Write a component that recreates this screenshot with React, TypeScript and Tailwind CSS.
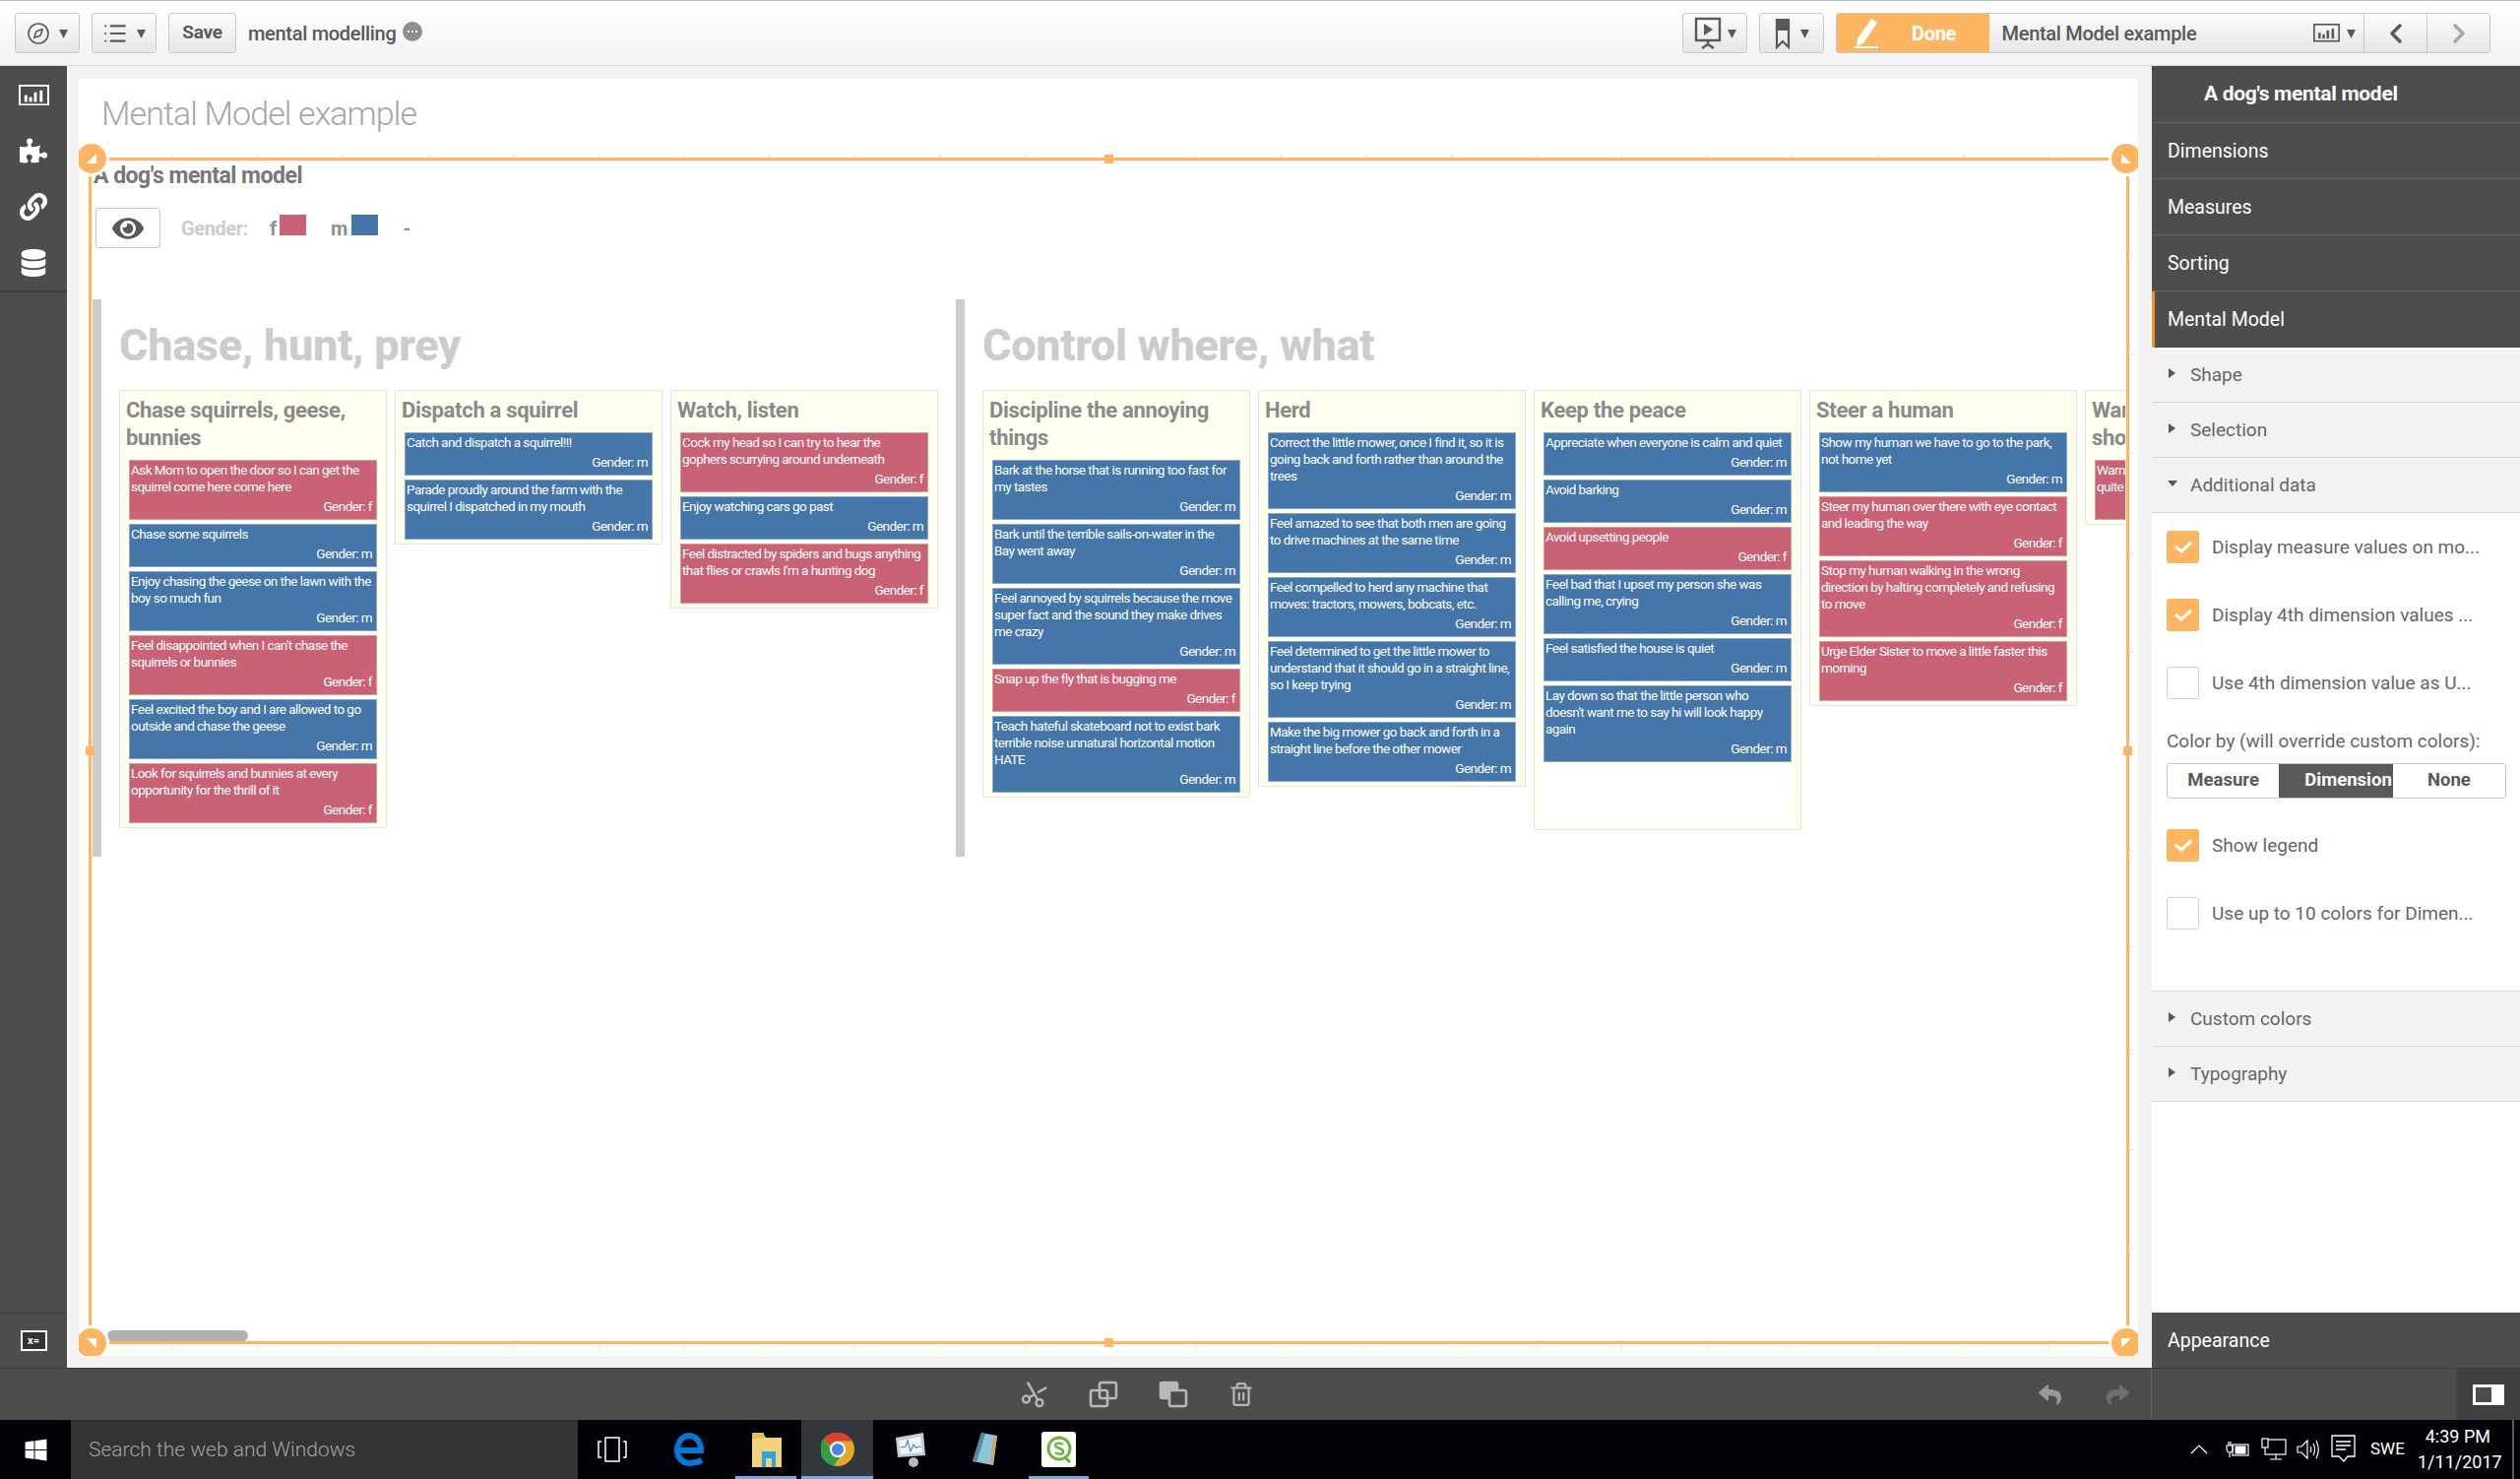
import { Compass, List, ChevronLeft, ChevronRight, Scissors, Trash2 } from "lucide-react";
import { FaDatabase, FaEye, FaLink, FaPuzzlePiece, FaReply, FaShare, FaWindows } from "react-icons/fa";

type Card = { text: string; g: "f" | "m" };
type Col = { title: string; cards: Card[]; filler?: boolean };

const group1: Col[] = [
  {
    title: "Chase squirrels, geese,\nbunnies",
    cards: [
      { text: "Ask Mom to open the door so I can get the\nsquirrel come here come here", g: "f" },
      { text: "Chase some squirrels", g: "m" },
      { text: "Enjoy chasing the geese on the lawn with the\nboy so much fun", g: "m" },
      { text: "Feel disappointed when I can't chase the\nsquirrels or bunnies", g: "f" },
      { text: "Feel excited the boy and I are allowed to go\noutside and chase the geese", g: "m" },
      { text: "Look for squirrels and bunnies at every\nopportunity for the thrill of it", g: "f" },
    ],
  },
  {
    title: "Dispatch a squirrel",
    cards: [
      { text: "Catch and dispatch a squirrel!!!", g: "m" },
      { text: "Parade proudly around the farm with the\nsquirrel I dispatched in my mouth", g: "m" },
    ],
  },
  {
    title: "Watch, listen",
    cards: [
      { text: "Cock my head so I can try to hear the\ngophers scurrying around underneath", g: "f" },
      { text: "Enjoy watching cars go past", g: "m" },
      { text: "Feel distracted by spiders and bugs anything\nthat flies or crawls I'm a hunting dog", g: "f" },
    ],
  },
];

const group2: Col[] = [
  {
    title: "Discipline the annoying\nthings",
    cards: [
      { text: "Bark at the horse that is running too fast for\nmy tastes", g: "m" },
      { text: "Bark until the terrible sails-on-water in the\nBay went away", g: "m" },
      { text: "Feel annoyed by squirrels because the move\nsuper fact and the sound they make drives\nme crazy", g: "m" },
      { text: "Snap up the fly that is bugging me", g: "f" },
      { text: "Teach hateful skateboard not to exist bark\nterrible noise unnatural horizontal motion\nHATE", g: "m" },
    ],
  },
  {
    title: "Herd",
    cards: [
      { text: "Correct the little mower, once I find it, so it is\ngoing back and forth rather than around the\ntrees", g: "m" },
      { text: "Feel amazed to see that both men are going\nto drive machines at the same time", g: "m" },
      { text: "Feel compelled to herd any machine that\nmoves: tractors, mowers, bobcats, etc.", g: "m" },
      { text: "Feel determined to get the little mower to\nunderstand that it should go in a straight line,\nso I keep trying", g: "m" },
      { text: "Make the big mower go back and forth in a\nstraight line before the other mower", g: "m" },
    ],
  },
  {
    title: "Keep the peace",
    filler: true,
    cards: [
      { text: "Appreciate when everyone is calm and quiet", g: "m" },
      { text: "Avoid barking", g: "m" },
      { text: "Avoid upsetting people", g: "f" },
      { text: "Feel bad that I upset my person she was\ncalling me, crying", g: "m" },
      { text: "Feel satisfied the house is quiet", g: "m" },
      { text: "Lay down so that the little person who\ndoesn't want me to say hi will look happy\nagain", g: "m" },
    ],
  },
  {
    title: "Steer a human",
    cards: [
      { text: "Show my human we have to go to the park,\nnot home yet", g: "m" },
      { text: "Steer my human over there with eye contact\nand leading the way", g: "f" },
      { text: "Stop my human walking in the wrong\ndirection by halting completely and refusing\nto move", g: "f" },
      { text: "Urge Elder Sister to move a little faster this\nmorning", g: "f" },
    ],
  },
  {
    title: "Warn people about\nshortcuts",
    cards: [{ text: "Warn my human when things are\nquite wrong", g: "f" }],
  },
];

function Caret({ className = "" }: { className?: string }) {
  return (
    <svg width="9" height="10" viewBox="0 0 9 10" className={className}>
      <polygon points="0,1 9,1 4.5,10" fill="currentColor" />
    </svg>
  );
}

function ChartGlyph({ size = 32, color = "#fff" }: { size?: number; color?: string }) {
  return (
    <svg width={size} height={(size * 22) / 32} viewBox="0 0 32 22">
      <rect x="1" y="1" width="30" height="20" fill="none" stroke={color} strokeWidth="2" />
      <rect x="6" y="11" width="3" height="7" fill={color} />
      <rect x="11" y="13" width="3" height="5" fill={color} />
      <rect x="16" y="8" width="3" height="10" fill={color} />
      <rect x="22" y="6" width="3" height="12" fill={color} />
    </svg>
  );
}

function ToolBtn({ children, className = "" }: { children: React.ReactNode; className?: string }) {
  return (
    <div className={`h-[41px] flex items-center justify-center border border-[#c8c8c8] rounded-[3px] bg-gradient-to-b from-[#fcfcfc] to-[#e6e6e6] text-[#595959] ${className}`}>
      {children}
    </div>
  );
}

function TopBar() {
  return (
    <div className="h-[67px] shrink-0 flex items-center pl-[15px] pr-[30px] border-t border-t-[#bdbdbd] border-b border-b-[#dcdcdc] bg-gradient-to-b from-white to-[#f2f2f2]">
      <ToolBtn className="w-[66px] gap-[9px]">
        <Compass size={24} strokeWidth={1.6} />
        <Caret />
      </ToolBtn>
      <ToolBtn className="w-[66px] gap-[9px] ml-[12px]">
        <List size={26} strokeWidth={2} />
        <Caret />
      </ToolBtn>
      <ToolBtn className="w-[69px] ml-[12px] text-[19px] font-bold tracking-[-0.3px]">Save</ToolBtn>
      <div className="ml-[12px] text-[20px] font-medium tracking-[-0.3px] text-[#595959]">mental modelling</div>
      <div className="ml-[6px] -mt-[3px] w-[20px] h-[20px] rounded-full bg-[#8f8f8f] flex items-center justify-center gap-[2px]">
        <span className="w-[2px] h-[2px] bg-white" />
        <span className="w-[2px] h-[2px] bg-white" />
        <span className="w-[2px] h-[2px] bg-white" />
      </div>

      <div className="ml-auto flex items-center">
        <ToolBtn className="w-[66px] gap-[6px]">
          <svg width="28" height="34" viewBox="0 0 28 34" fill="none" stroke="#595959" strokeWidth="2.4">
            <rect x="2" y="2" width="24" height="22" />
            <polygon points="10,7 19,13 10,19" fill="#595959" stroke="none" />
            <path d="M14 24v5M8 32l6-4 6 4" />
          </svg>
          <Caret />
        </ToolBtn>
        <ToolBtn className="w-[66px] gap-[10px] ml-[12px]">
          <svg width="16" height="32" viewBox="0 0 16 32" fill="none" stroke="#595959" strokeWidth="2.2">
            <path d="M2 4a2 2 0 0 1 2-2h8a2 2 0 0 1 2 2v26l-6-6-6 6z" />
            <path d="M2 2h12v10H2z" fill="#595959" />
          </svg>
          <Caret />
        </ToolBtn>
        <div className="ml-[12px] h-[41px] w-[665px] flex border border-[#c8c8c8] rounded-[3px] overflow-hidden">
          <div className="w-[155px] bg-[#fcb662] text-white flex items-center pl-[17px]">
            <svg width="26" height="32" viewBox="0 0 26 32" fill="#fff">
              <path d="M18 1l6 4-14 21-7 3 1-8z" />
              <rect x="1" y="29" width="24" height="2" />
            </svg>
            <span className="ml-[33px] text-[20px] font-bold tracking-[-0.3px]">Done</span>
          </div>
          <div className="w-[382px] bg-gradient-to-b from-[#fcfcfc] to-[#e6e6e6] flex items-center pl-[13px] text-[20px] font-medium tracking-[-0.3px] text-[#595959]">
            Mental Model example
            <span className="ml-auto flex items-center gap-[7px] pr-[8px]">
              <ChartGlyph size={27} color="#595959" />
              <Caret />
            </span>
          </div>
          <div className="w-[64px] border-l border-[#c8c8c8] bg-gradient-to-b from-[#fcfcfc] to-[#e6e6e6] flex items-center justify-center text-[#595959]">
            <ChevronLeft size={32} strokeWidth={2.6} />
          </div>
          <div className="w-[64px] border-l border-[#c8c8c8] bg-gradient-to-b from-[#fcfcfc] to-[#e6e6e6] flex items-center justify-center text-[#a6a6a6]">
            <ChevronRight size={32} strokeWidth={2.6} />
          </div>
        </div>
      </div>
    </div>
  );
}

function LeftBar() {
  return (
    <div className="w-[68px] shrink-0 bg-[#4d4d4d] flex flex-col items-center text-white">
      <div className="h-[230px] w-full border-b-2 border-[#3d3d3d] flex flex-col items-center pt-[19px]">
        <ChartGlyph size={31} />
        <FaPuzzlePiece size={28} className="mt-[32px]" />
        <FaLink size={28} className="mt-[29px]" />
        <FaDatabase size={28} className="mt-[29px]" />
      </div>
      <div className="mt-auto h-[56px] w-full border-t border-[#3d3d3d] flex items-center justify-center">
        <div className="w-[27px] h-[21px] bg-white flex items-center justify-center">
          <div className="w-[23px] h-[17px] bg-[#333] text-white text-[11px] leading-[17px] font-bold text-center">x=</div>
        </div>
      </div>
    </div>
  );
}

function KanbanCard({ card }: { card: Card }) {
  const bg = card.g === "f" ? "bg-[#c96274] border-[#dc9aa5]" : "bg-[#4476aa] border-[#86a8cb]";
  return (
    <div className={`${bg} border text-white text-[13.5px] leading-[17px] tracking-[-0.55px] pl-[1px] pr-[4px] pt-[1px] pb-[4px]`}>
      <div className="whitespace-pre">{card.text}</div>
      <div className="mt-[3px] text-right">Gender: {card.g}</div>
    </div>
  );
}

function Column({ col }: { col: Col }) {
  return (
    <div className={`w-[272px] shrink-0 bg-[#fffff0] border border-[#e4e4de] pb-[4px] flex flex-col self-start ${col.filler ? "h-[447px]" : ""}`}>
      <div className="px-[6px] pt-[6px] pb-[8px] text-[22px] leading-[28px] font-bold tracking-[-0.3px] text-[#8a8a8a] whitespace-pre">{col.title}</div>
      <div className="mx-[9px] flex flex-col gap-[4px] flex-1">
        {col.cards.map((c) => (
          <KanbanCard key={c.text} card={c} />
        ))}
        {col.filler && <div className="flex-1 bg-white" />}
      </div>
    </div>
  );
}

function Group({ title, cols, className }: { title: string; cols: Col[]; className: string }) {
  return (
    <div className={`h-[566px] shrink-0 border-l-[9px] border-[#cccccc] pl-[18px] ${className}`}>
      <div className="h-[92px] pt-[2px] flex items-center text-[45px] font-extrabold tracking-[-0.3px] text-[#cccccc] whitespace-nowrap">{title}</div>
      <div className="flex gap-[8px]">
        {cols.map((c) => (
          <Column key={c.title} col={c} />
        ))}
      </div>
    </div>
  );
}

function Handle({ className, points }: { className: string; points: string }) {
  return (
    <div className={`absolute w-[36px] h-[36px] rounded-full bg-[#fcb662] border-[3px] border-white flex items-center justify-center ${className}`}>
      <svg width="12" height="12" viewBox="0 0 12 12">
        <polygon points={points} fill="#fff" />
      </svg>
    </div>
  );
}

function SelectionFrame() {
  const xs = Array.from({ length: 23 }, (_, i) => 84 + i * 86.6);
  const ys = Array.from({ length: 11 }, (_, i) => 97 + i * 101);
  return (
    <div className="absolute left-[11px] top-[81px] w-[2071px] h-[1203px] pointer-events-none">
      <div className="absolute left-0 right-0 top-[-1px] h-[3px] bg-[#fcb662]" />
      <div className="absolute left-0 right-0 bottom-[-1px] h-[3px] bg-[#fcb662]" />
      <div className="absolute left-[-1px] top-0 bottom-0 w-[3px] bg-[#fcb662]" />
      <div className="absolute right-[-1px] top-0 bottom-0 w-[3px] bg-[#fcb662]" />
      {xs.map((x) => (
        <span key={x} className="absolute top-[-5px] w-px h-[4px] bg-[#fde6c8]" style={{ left: x }} />
      ))}
      {xs.map((x) => (
        <span key={x} className="absolute bottom-[-6px] w-px h-[4px] bg-[#fde6c8]" style={{ left: x }} />
      ))}
      {ys.map((y) => (
        <span key={y} className="absolute right-[-6px] h-px w-[4px] bg-[#fde6c8]" style={{ top: y }} />
      ))}
      <span className="absolute left-[1031px] top-[-4px] w-[9px] h-[9px] bg-[#fcb662]" />
      <span className="absolute left-[1031px] bottom-[-4px] w-[9px] h-[9px] bg-[#fcb662]" />
      <span className="absolute left-[-4px] top-[597px] w-[9px] h-[9px] bg-[#fcb662]" />
      <span className="absolute right-[-4px] top-[597px] w-[9px] h-[9px] bg-[#fcb662]" />
      <Handle className="left-[-16px] top-[-18px]" points="11,1 11,11 1,11" />
      <Handle className="right-[-16px] top-[-18px]" points="1,1 1,11 11,11" />
      <Handle className="left-[-16px] bottom-[-18px]" points="1,1 11,1 11,11" />
      <Handle className="right-[-16px] bottom-[-18px]" points="1,1 11,1 1,11" />
    </div>
  );
}

function Sheet() {
  return (
    <div className="flex-1 bg-[#f2f2f2] pt-[13px] pl-[12px] pr-[14px] pb-[12px] min-w-0">
      <div className="relative h-full bg-white overflow-hidden">
        <div className="h-[70px] mb-[11px] pl-[23px] flex items-center text-[34px] font-light tracking-[-0.9px] text-[#a6a6a6]">Mental Model example</div>
        <div className="pl-[14px] pr-[13px]">
          <div className="h-[34px] pl-[1px] pt-[2px] flex items-center text-[23px] font-bold tracking-[-0.5px] text-[#777777]">A dog's mental model</div>
          <div className="mt-[16px] h-[41px] flex items-center">
            <div className="ml-[3px] w-[66px] h-[41px] border border-[#c8c8c8] rounded-[3px] flex items-center justify-center text-[#595959]">
              <FaEye size={32} />
            </div>
            <span className="ml-[21px] text-[20px] font-bold tracking-[-0.4px] text-[#cccccc]">Gender:</span>
            <span className="ml-[22px] text-[20px] font-bold text-[#8f8f8f]">f</span>
            <span className="ml-[3px] -mt-[6px] w-[27px] h-[21px] bg-[#c96274]" />
            <span className="ml-[25px] text-[20px] font-bold text-[#8f8f8f]">m</span>
            <span className="ml-[4px] -mt-[6px] w-[27px] h-[21px] bg-[#4476aa]" />
            <span className="ml-[25px] text-[20px] font-bold text-[#8f8f8f]">-</span>
          </div>
          <div className="mt-[52px] flex overflow-hidden">
            <Group title="Chase, hunt, prey" cols={group1} className="w-[877px]" />
            <Group title="Control where, what" cols={group2} className="w-[1500px]" />
          </div>
        </div>
        <div className="absolute left-[29px] top-[1271px] w-[143px] h-[11px] rounded-full bg-[#b0b0b0]" />
        <SelectionFrame />
      </div>
    </div>
  );
}

function Check({ on, label }: { on: boolean; label: string }) {
  return (
    <div className="h-[69px] flex items-center">
      {on ? (
        <div className="w-[33px] h-[33px] rounded-[3px] bg-[#fcb662] flex items-center justify-center">
          <svg width="20" height="14" viewBox="0 0 20 14" fill="none" stroke="#fff" strokeWidth="3.2">
            <path d="M2 6l6 5 10-9" />
          </svg>
        </div>
      ) : (
        <div className="w-[33px] h-[33px] rounded-[3px] bg-white border border-[#cfcfcf]" />
      )}
      <span className="ml-[13px] pt-[2px] text-[19px] text-[#666666] whitespace-nowrap">{label}</span>
    </div>
  );
}

function Section({ label, open }: { label: string; open?: boolean }) {
  return (
    <div className="h-[56px] pt-[2px] flex items-center bg-[#f2f2f2] border-b border-[#d9d9d9] text-[19px] text-[#666666]">
      <svg width="12" height="12" viewBox="0 0 12 12" className="ml-[15px] -mt-[5px]">
        {open ? <polygon points="1,3 11,3 6,9" fill="#595959" /> : <polygon points="2,1 9,6 2,11" fill="#595959" />}
      </svg>
      <span className="ml-[12px]">{label}</span>
    </div>
  );
}

function RightPanel() {
  const navItem = "h-[57px] pl-[16px] pt-[1px] flex items-center text-[19.5px] text-white bg-[#4d4d4d] border-b border-[#666666]";
  return (
    <div className="w-[374px] shrink-0 bg-white flex flex-col">
      <div className="h-[58px] pl-[53px] flex items-center text-[21px] font-bold tracking-[-0.3px] text-white bg-[#4d4d4d] border-b border-[#666666]">A dog's mental model</div>
      <div className={navItem}>Dimensions</div>
      <div className={navItem}>Measures</div>
      <div className={navItem}>Sorting</div>
      <div className="h-[57px] pl-[13px] flex items-center text-[19.5px] text-white bg-[#4d4d4d] border-l-[3px] border-[#f8941d]">Mental Model</div>
      <Section label="Shape" />
      <Section label="Selection" />
      <Section label="Additional data" open />
      <div className="h-[486px] px-[15px] border-b border-[#d9d9d9]">
        <Check on label="Display measure values on mo..." />
        <Check on label="Display 4th dimension values ..." />
        <Check on={false} label="Use 4th dimension value as U..." />
        <div className="mt-[10px] h-[28px] pt-[2px] flex items-center text-[19px] text-[#666666] whitespace-nowrap">Color by (will override custom colors):</div>
        <div className="mt-[9px] w-[345px] h-[36px] flex border border-[#c8c8c8] rounded-[3px] overflow-hidden text-[18.5px] font-bold">
          <div className="w-[115px] flex items-center justify-center text-[#595959] border-r border-[#595959]">Measure</div>
          <div className="w-[115px] pl-[25px] flex items-center overflow-hidden bg-[#595959] text-white">Dimension</div>
          <div className="w-[115px] flex items-center justify-center text-[#595959]">None</div>
        </div>
        <div className="mt-[13px]">
          <Check on label="Show legend" />
          <Check on={false} label="Use up to 10 colors for Dimen..." />
        </div>
      </div>
      <Section label="Custom colors" />
      <Section label="Typography" />
      <div className="flex-1" />
      <div className="h-[56px] pl-[16px] pt-[1px] flex items-center text-[19.5px] text-white bg-[#4d4d4d]">Appearance</div>
    </div>
  );
}

function BottomBar() {
  return (
    <div className="h-[53px] shrink-0 bg-[#4d4d4d] border-t border-[#3d3d3d] flex text-[#b8b8b8]">
      <div className="w-[2186px] flex items-center border-r border-[#5e5e5e]">
        <div className="flex items-center ml-[1037px] gap-[41px]">
          <Scissors size={28} className="-rotate-[75deg]" />
          <svg width="30" height="28" viewBox="0 0 30 28" fill="none" stroke="currentColor" strokeWidth="2.6">
            <rect x="11" y="2" width="17" height="16" rx="2" />
            <rect x="2" y="10" width="17" height="16" rx="2" />
          </svg>
          <svg width="30" height="28" viewBox="0 0 30 28" fill="none" stroke="currentColor" strokeWidth="2.6">
            <rect x="2" y="2" width="17" height="16" rx="2" fill="currentColor" />
            <rect x="11" y="10" width="17" height="16" rx="2" fill="#4d4d4d" />
          </svg>
          <Trash2 size={26} />
        </div>
        <div className="ml-auto mr-[22px] flex items-center gap-[46px]">
          <FaReply size={23} className="text-[#999999]" />
          <FaShare size={23} className="text-[#6e6e6e]" />
        </div>
      </div>
      <div className="ml-auto w-[65px] bg-[#414141] flex items-center justify-center">
        <div className="w-[32px] h-[21px] bg-white flex items-center pl-[3px]">
          <div className="w-[16px] h-[15px] bg-[#4d4d4d]" />
        </div>
      </div>
    </div>
  );
}

function ChromeIcon() {
  return (
    <svg width="34" height="34" viewBox="0 0 34 34">
      <circle cx="17" cy="17" r="17" fill="#e0a92c" />
      <path d="M17 0a17 17 0 0 1 14.7 8.5H17a8.5 8.5 0 0 0-8 5.6L3 5.5A17 17 0 0 1 17 0z" fill="#d8412f" />
      <path d="M3 5.5l6.4 11 .6 1.5a8 8 0 0 0 9 7l-6 8.5A17 17 0 0 1 3 5.5z" fill="#2f9e44" />
      <circle cx="17" cy="17" r="8" fill="#fff" />
      <circle cx="17" cy="17" r="6" fill="#4b83e8" />
    </svg>
  );
}

function Taskbar() {
  return (
    <div className="h-[60px] shrink-0 bg-[#010206] flex items-center text-white relative">
      <div className="w-[72px] flex justify-center">
        <FaWindows size={25} />
      </div>
      <div className="w-[515px] h-full pt-[2px] bg-[#333333] flex items-center pl-[18px] text-[21px] font-light text-[#a3a3a3]">Search the web and Windows</div>
      <div className="w-[70px] flex justify-center">
        <svg width="30" height="26" viewBox="0 0 30 26" fill="none" stroke="#fff" strokeWidth="1.5">
          <rect x="8" y="1" width="14" height="24" />
          <path d="M4 5H1v16h3M26 5h3v16h-3" />
        </svg>
      </div>
      <div className="w-[87px] flex justify-center">
        <svg width="32" height="34" viewBox="0 0 32 34" fill="none" stroke="#0078d7" strokeWidth="6">
          <path d="M5 18H27C27 8 21 3 15 3C8 3 3 10 3 18C3 26 9 31 16 31C20 31 24 30 28 28" />
        </svg>
      </div>
      <div className="w-[70px] h-full flex justify-center items-center relative">
        <svg width="32" height="36" viewBox="0 0 32 36">
          <path d="M1 3h12l2 3h16v30H1z" fill="#f1d27a" />
          <rect x="1" y="1" width="12" height="6" fill="#e9bb4c" />
          <rect x="11" y="20" width="14" height="16" fill="#2aa5e0" />
          <rect x="15" y="27" width="6" height="9" fill="#f1d27a" />
        </svg>
        <span className="absolute bottom-0 left-[3px] right-[5px] h-[3px] bg-[#6aaee4]" />
      </div>
      <div className="w-[73px] h-full bg-[#33363a] flex items-center justify-center relative">
        <ChromeIcon />
        <span className="absolute bottom-0 left-0 right-0 h-[3px] bg-[#6aaee4]" />
      </div>
      <div className="w-[75px] flex justify-center">
        <svg width="34" height="36" viewBox="0 0 34 36">
          <polygon points="2,6 30,1 32,24 4,26" fill="#c9ced4" />
          <polygon points="5,9 27,5 29,21 7,23" fill="#f3f6f8" />
          <path d="M7 16l5-1 2-6 3 11 3-7 2 3 6-1" fill="none" stroke="#4a86c5" strokeWidth="1.2" />
          <circle cx="20" cy="31" r="5" fill="#b9b9b9" />
        </svg>
      </div>
      <div className="w-[76px] flex justify-center">
        <svg width="30" height="36" viewBox="0 0 30 36">
          <polygon points="12,1 28,4 24,34 3,30" fill="#8fc4d6" />
          <polygon points="12,1 16,2 7,31 3,30" fill="#4f8ea8" />
          <polygon points="24,6 28,4 24,34 21,33" fill="#c9a86a" />
        </svg>
      </div>
      <div className="w-[75px] h-full flex justify-center items-center relative">
        <div className="w-[35px] h-[36px] rounded-[3px] bg-white flex items-center justify-center">
          <svg width="28" height="30" viewBox="0 0 28 30" fill="none" stroke="#6fb33f">
            <circle cx="14" cy="14" r="11" strokeWidth="3" />
            <path d="M20 23l5 5" strokeWidth="3" />
            <path d="M18 10c-2-2-8-2-8 1s8 2 8 6-6 3-8 1" strokeWidth="2.4" />
          </svg>
        </div>
        <span className="absolute bottom-0 left-[7px] right-[7px] h-[3px] bg-[#6aaee4]" />
      </div>
      <div className="ml-auto flex items-center pr-[20px]">
        <svg width="18" height="10" viewBox="0 0 18 10" fill="none" stroke="#fff" strokeWidth="1.2" className="mr-[18px]">
          <path d="M1 9l8-8 8 8" />
        </svg>
        <svg width="24" height="18" viewBox="0 0 24 18" className="mr-[12px]" fill="none" stroke="#fff" strokeWidth="1.2">
          <rect x="7" y="4" width="16" height="11" />
          <rect x="10" y="6" width="10" height="7" fill="#fff" />
          <path d="M1 5h6v4a3 3 0 0 1-6 0zM3 1v4M5 1v4M4 12v5" />
        </svg>
        <svg width="26" height="24" viewBox="0 0 26 24" className="mr-[10px]" fill="none" stroke="#fff" strokeWidth="1.2">
          <rect x="4" y="2" width="21" height="15" />
          <rect x="1" y="1" width="6" height="9" fill="#010206" />
          <path d="M15 17v5M9 22h12" />
        </svg>
        <svg width="24" height="22" viewBox="0 0 24 22" className="mr-[11px]" fill="none" stroke="#fff" strokeWidth="1.2">
          <path d="M1 8h4l6-6v18l-6-6H1z" />
          <path d="M14 8c1 2 1 4 0 6M17 5c2 4 2 8 0 12M20 2c3 6 3 12 0 18" />
        </svg>
        <svg width="25" height="30" viewBox="0 0 25 30" className="mr-[15px]" fill="none" stroke="#fff" strokeWidth="1.3">
          <path d="M1 1h23v21H17l-4 5-5-5H1z" />
          <path d="M5 7h15M5 11h15M5 15h10" />
        </svg>
        <span className="text-[17px] w-[36px]">SWE</span>
        <div className="ml-[12px] w-[84px] text-right text-[18px] leading-[26px]">
          <div className="pr-[10px]">4:39 PM</div>
          <div>1/11/2017</div>
        </div>
      </div>
      <span className="absolute right-[6px] top-0 bottom-0 w-[2px] bg-[#5a5a5a]" />
    </div>
  );
}

export default function App() {
  return (
    <div className="w-[2560px] h-[1502px] overflow-hidden flex flex-col bg-white font-['Roboto',sans-serif]">
      <TopBar />
      <div className="flex-1 flex min-h-0">
        <LeftBar />
        <Sheet />
        <RightPanel />
      </div>
      <BottomBar />
      <Taskbar />
    </div>
  );
}
